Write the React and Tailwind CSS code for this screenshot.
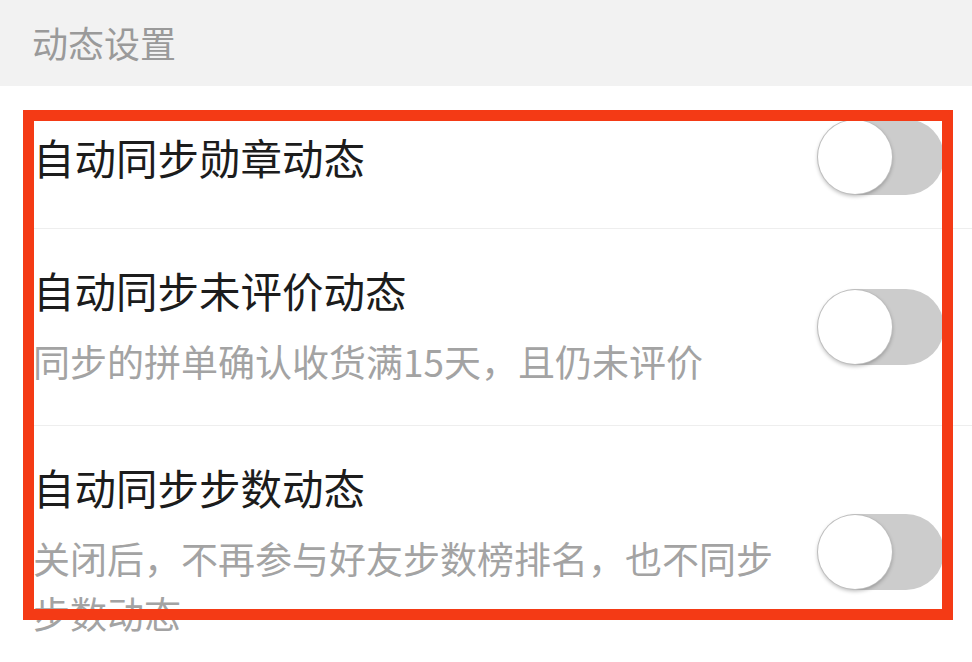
const rows = [
  { title: "自动同步勋章动态" },
  { title: "自动同步未评价动态", desc: "同步的拼单确认收货满15天，且仍未评价" },
  { title: "自动同步步数动态", desc: "关闭后，不再参与好友步数榜排名，也不同步步数动态" },
]

function Toggle() {
  return (
    <div className="relative h-[76px] w-[124px] shrink-0 rounded-full bg-[#cccccc]">
      <div className="absolute left-[-2px] top-px h-[74px] w-[74px] rounded-full bg-white shadow-[0_2px_4px_rgba(0,0,0,0.3)] ring-1 ring-[#bdbdbd]" />
    </div>
  )
}

export default function App() {
  return (
    <div
      className="relative h-[662px] w-[972px] overflow-hidden bg-white"
      style={{ fontFamily: '"Noto Sans CJK SC", "Noto Sans", sans-serif' }}
    >
      <div className="flex h-[86px] items-center bg-[#f2f2f2] pl-[32px] pb-[2px] text-[36px] text-[#9a9a9a]">
        动态设置
      </div>

      <div className="pl-[33px]">
        {rows.map((r, i) => (
          <div
            key={i}
            className={`flex items-center justify-between border-b border-[#eeeeee] pr-[28px] ${
              r.desc ? "py-[36px]" : "h-[143px]"
            }`}
          >
            <div className="flex flex-col">
              <div className="text-[41.5px] leading-[50px] text-[#1c1c1c]">{r.title}</div>
              {r.desc && (
                <div className="mt-[19px] max-w-[750px] text-[37px] leading-[55px] text-[#a3a3a3]">
                  {r.desc}
                </div>
              )}
            </div>
            <Toggle />
          </div>
        ))}
      </div>

      <div className="pointer-events-none absolute left-[23px] top-[110px] h-[510px] w-[930px] border-[11px] border-[#f43a15]" />
    </div>
  )
}
